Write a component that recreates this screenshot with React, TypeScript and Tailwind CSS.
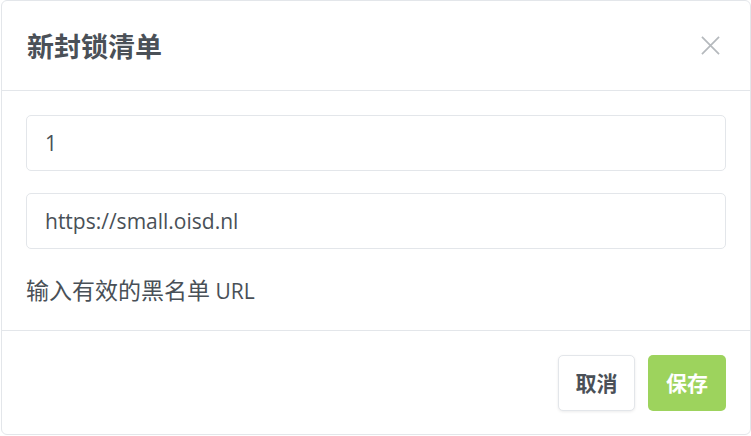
export default function App() {
  return (
    <div className="w-[751px] h-[436px] bg-white font-['Open_Sans','Noto_Sans_CJK_SC',sans-serif]">
      <div className="ml-[1px] w-[750px] h-[435px] border border-[#e3e6ea] rounded-[6px] flex flex-col bg-white">
        {/* Header */}
        <div className="h-[90px] shrink-0 flex items-center justify-between px-[25px] border-b border-[#e3e6ea]">
          <h1 className="text-[27px] font-bold text-[#4a5057] font-['Noto_Sans_CJK_SC',sans-serif] leading-none">
            新封锁清单
          </h1>
          <button className="w-[20px] h-[20px] flex items-center justify-center mr-[5px]">
            <svg width="19" height="19" viewBox="0 0 20 20" fill="none" stroke="#b5b9bd" strokeWidth="1.8">
              <path d="M1 1L19 19M19 1L1 19" />
            </svg>
          </button>
        </div>

        {/* Body */}
        <div className="h-[240px] shrink-0 px-[24px] pt-[24px] flex flex-col border-b border-[#e3e6ea]">
          <input
            defaultValue="1"
            className="h-[56px] w-full border border-[#e3e6ea] rounded-[5px] px-[18px] text-[21px] text-[#495057] outline-none"
          />
          <input
            defaultValue="https://small.oisd.nl"
            className="mt-[22px] h-[56px] w-full border border-[#e3e6ea] rounded-[5px] px-[18px] text-[21px] text-[#495057] outline-none"
          />
          <p className="mt-[26px] text-[21px] text-[#495057] leading-[28px]">
            <span className="text-[23px] font-['Noto_Sans_CJK_SC',sans-serif]">输入有效的黑名单</span> URL
          </p>
        </div>

        {/* Footer */}
        <div className="flex-1 flex justify-end items-start gap-[13px] pt-[24px] px-[24px]">
          <button className="h-[56px] w-[77px] bg-white border border-[#e3e6ea] rounded-[5px] shadow-[0_1px_3px_rgba(0,0,0,0.08)] text-[21px] font-bold text-[#4a5057] font-['Noto_Sans_CJK_SC',sans-serif]">
            取消
          </button>
          <button className="h-[56px] w-[78px] bg-[#9dd35d] rounded-[5px] text-[21px] font-bold text-white font-['Noto_Sans_CJK_SC',sans-serif]">
            保存
          </button>
        </div>
      </div>
    </div>
  );
}
